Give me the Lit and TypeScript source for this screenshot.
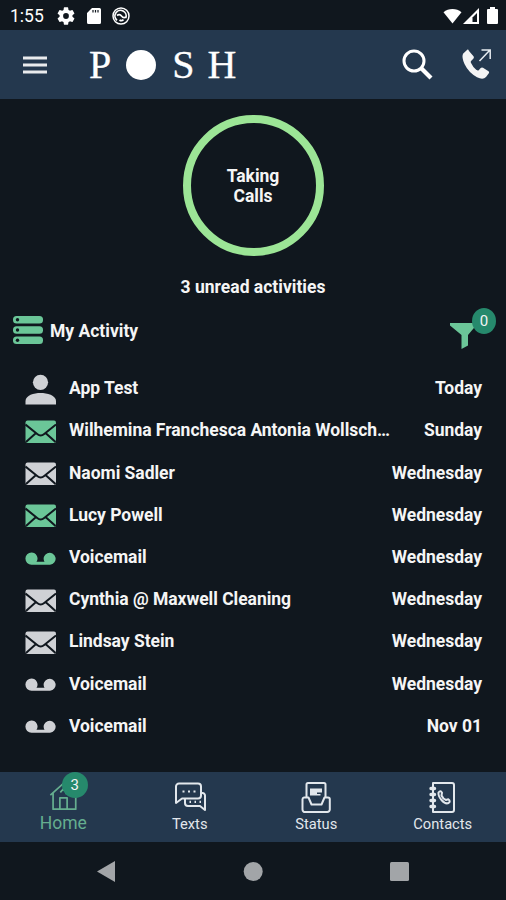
import { LitElement, html, css, svg } from "lit";
import { customElement, property } from "lit/decorators.js";
import { classMap } from "lit/directives/class-map.js";

type Kind = "person" | "mail" | "voicemail";
interface Activity { kind: Kind; name: string; when: string; unread?: boolean; }

const activities: Activity[] = [
  { kind: "person", name: "App Test", when: "Today" },
  { kind: "mail", name: "Wilhemina Franchesca Antonia Wollsch…", when: "Sunday", unread: true },
  { kind: "mail", name: "Naomi Sadler", when: "Wednesday" },
  { kind: "mail", name: "Lucy Powell", when: "Wednesday", unread: true },
  { kind: "voicemail", name: "Voicemail", when: "Wednesday", unread: true },
  { kind: "mail", name: "Cynthia @ Maxwell Cleaning", when: "Wednesday" },
  { kind: "mail", name: "Lindsay Stein", when: "Wednesday" },
  { kind: "voicemail", name: "Voicemail", when: "Wednesday" },
  { kind: "voicemail", name: "Voicemail", when: "Nov 01" },
];

const glyphs = {
  person: svg`<circle cx="15.5" cy="8.300" r="7.6"/><path d="M.5 30.5v-3.4C.5 21.300 9 19 15.500 19S31 21.300 31 27.100v3.400z"/>`,
  mail: svg`<rect x=".5" y="4.500" width="30.500" height="22.500" rx="2"/><path class="cut" d="M.5 8.500 12.200 18q3.500 3 7 0L31 8.500M1 26l10-9M30.500 26l-10-9"/>`,
  voicemail: svg`<path d="M6.500 9.500a6 6 0 0 1 5 9.300h8a6 6 0 1 1 5.500 2.900h-18.500a6.100 6.100 0 0 1 0-12.200z"/>`,
};

@customElement("activity-row")
class ActivityRow extends LitElement {
  @property({ attribute: false }) item!: Activity;
  static styles = css`
    :host { display: block; height: 42.2px; }
    .row { display: flex; align-items: center; height: 100%; padding: 0 24px 0 25px; font-size: 17.500px; font-weight: 700; letter-spacing: -0.03px; }
    svg { width: 31px; height: 31px; flex: none; margin: 2px 13px 0 0; fill: #cfd1d5; }
    .unread svg { fill: #6bc698; }
    .cut { fill: none; stroke: #10171e; stroke-width: 2; }
    .name, .when { white-space: nowrap; }
    .when { margin-left: auto; }
  `;
  render() {
    return html`<div class=${classMap({ row: true, unread: !!this.item.unread })}>
      <svg viewBox="0 0 31 31">${glyphs[this.item.kind]}</svg>
      <span class="name">${this.item.name}</span><span class="when">${this.item.when}</span>
    </div>`;
  }
}

const tabs = [
  { label: "Home", badge: "3", icon: svg`<path d="M1.500 14.500 16 1.500l14 13M4.500 12.500V30h25V12.500M12 30V17.500h8V30M12.500 11.500l3.500-4 3 3v3"/>` },
  { label: "Texts", icon: svg`<path d="M5 2.500h19a3 3 0 0 1 3 3v9a3 3 0 0 1-3 3H8l-6 4.500V5.500a3 3 0 0 1 3-3z"/><path d="M27 12h1.500a2.500 2.500 0 0 1 2.500 2.500V29l-5-4H14a3 3 0 0 1-3-3v-4"/><path class="dots" d="M8.500 10.500h2m3.500 0h2m3.500 0h2M15.500 20.800h1.500m3.500 0h1.500m3.500 0h1.500"/>` },
  { label: "Status", icon: svg`<path d="M6.500 16V3.500a1.500 1.500 0 0 1 1.500-1.500h16a1.500 1.500 0 0 1 1.500 1.500V16"/><path d="M4 16.500h4.500l3 7h10l3-7H28a1.800 1.800 0 0 1 1.800 1.800V28.500a2.500 2.500 0 0 1-2.500 2.500h-22A2.500 2.500 0 0 1 2.500 28.500V18.300A1.800 1.800 0 0 1 4 16.500z"/><path class="solid" d="M10 7.500h12v4h-5v1.500h3.500v1.500H10z"/>` },
  { label: "Contacts", icon: svg`<path d="M6 2h19a2 2 0 0 1 2 2v25a2 2 0 0 1-2 2H6z"/><path class="rings" d="M4 7.500h3.500M4 13.500h3.500M4 19.500h3.500M4 25.500h3.500"/><path d="M11.500 11.500q2-2.500 3.500.2l-.5 2.800q1.500 3.500 4.500 4.500l2.300-.7q2.700 2 .2 3.700-3 1.500-7-3-3.500-4-3-7.500z"/>` },
];

@customElement("app-root")
class AppRoot extends LitElement {
  static styles = css`
    * { box-sizing: border-box; }
    :host { display: flex; flex-direction: column; width: 506px; height: 900px; overflow: hidden; background: #10171e; color: #f5f5f5; font-family: Roboto, sans-serif; }
    svg { display: block; flex: none; overflow: visible; }
    .status { height: 30px; flex: none; display: flex; align-items: center; padding: 1px 8px 0 10px; font-size: 17.500px; color: #fff; }
    .clock { width: 47px; }
    .sd { margin-left: 12px; }
    .dnd { margin-left: 11px; }
    .cell { margin-left: 1px; }
    .battery { margin-left: 8px; }
    .end { margin-left: auto; }
    .bar { height: 68.500px; flex: none; display: flex; align-items: center; background: #24384e; padding: 2px 13px 0 23px; }
    .menu { width: 24px; height: 18px; margin-right: 42px; }
    .logo { display: flex; align-items: center; font: 40px/44px "Liberation Serif", serif; color: #fff; height: 44px; -webkit-text-stroke: .3px #fff; }
    .logo .o { width: 30px; height: 30px; border-radius: 50%; background: #fff; margin: 0 16px 0 15px; }
    .logo .s { margin-right: 13px; }
    .search { margin-left: auto; margin-right: 28px; }
    .call { width: 32px; height: 32px; }
    .ring { width: 141px; height: 141px; flex: none; margin: 16px auto 0; border: 8px solid #9ce596; border-radius: 50%; display: flex; align-items: center; justify-content: center; text-align: center; font-weight: 700; font-size: 17.500px; line-height: 20px; padding-top: 1px; }
    .summary { text-align: center; font-weight: 700; font-size: 17.500px; line-height: 22px; margin-top: 20px; }
    .heading { display: flex; align-items: center; height: 44px; margin-top: 11px; padding: 0 24px 0 13px; font-size: 17.500px; font-weight: 700; }
    .heading .stack { margin: -2px 7px 0 0; }
    .filter { position: relative; margin: 10px 0 0 auto; width: 32px; }
    .badge { position: absolute; border-radius: 50%; background: #26896c; color: #f4f4f4; display: flex; align-items: center; justify-content: center; font-weight: 400; width: 24px; height: 26px; font-size: 15px; }
    .filter .badge { left: 22px; top: -15px; }
    .list { margin-top: 14.700px; }
    .tabs { height: 70px; flex: none; margin-top: auto; background: #24384e; display: grid; grid-template-columns: repeat(4, 1fr); }
    .tab { display: flex; flex-direction: column; align-items: center; padding-top: 9px; font-size: 14.700px; color: #e2e7ec; line-height: 18px; }
    .art { position: relative; margin-bottom: 2px; }
    .art svg { width: 32px; height: 32px; fill: none; stroke: currentColor; stroke-width: 2; stroke-linejoin: round; }
    .art .dots { stroke-width: 2.200; }
    .art .solid { fill: currentColor; stroke: none; }
    .art .rings { stroke-width: 3.400; stroke-linecap: round; }
    .active { color: #65ae8f; font-size: 17.500px; }
    .active .art { margin-bottom: 1px; }
    .active .art svg { width: 29px; height: 29px; margin: 1px 0 2px; stroke-width: 1.900; }
    .art .badge { left: 13px; top: -9px; width: 26px; height: 26px; }
    .nav { height: 58px; flex: none; display: flex; align-items: center; fill: #a2a5a8; padding: 0 97px; justify-content: space-between; }
  `;
  render() {
    return html`
      <div class="status">
        <span class="clock">1:55</span>
        <svg width="18" height="18" viewBox="2 2 20 20" fill="#fff"><path d="M19.140 12.940a7.070 7.070 0 0 0 0-1.880l2.030-1.580a.5.5 0 0 0 .12-.61l-1.920-3.320a.49.49 0 0 0-.59-.22l-2.390.96a7 7 0 0 0-1.620-.94l-.36-2.540A.48.48 0 0 0 13.930 2.400h-3.840a.48.48 0 0 0-.47.410l-.36 2.540a7.300 7.300 0 0 0-1.620.94l-2.390-.96a.48.48 0 0 0-.59.22L2.740 8.870a.47.470 0 0 0 .12.610l2.030 1.580a7.400 7.400 0 0 0 0 1.880l-2.030 1.580a.5.500 0 0 0-.12.610l1.920 3.320c.12.220.370.290.590.220l2.390-.96c.5.380 1.030.700 1.620.940l.36 2.540c.05.240.240.410.480.410h3.840c.24 0 .440-.170.470-.410l.36-2.540a7 7 0 0 0 1.620-.940l2.390.96c.22.080.470 0 .590-.220l1.920-3.320a.47.470 0 0 0-.12-.610zM12 15.200a3.200 3.200 0 1 1 0-6.400 3.200 3.200 0 0 1 0 6.400z"/></svg>
        <svg class="sd" width="14" height="16" viewBox="0 0 14 16"><path fill="#fff" d="M5 0h7.500A1.500 1.500 0 0 1 14 1.500v13a1.500 1.500 0 0 1-1.500 1.500h-11A1.500 1.500 0 0 1 0 14.500V5z"/><path stroke="#10171e" stroke-width="1.200" d="M6 2v2.500M8.500 2v2.500M11 2v2.500"/></svg>
        <svg class="dnd" width="18" height="18" viewBox="0 0 18 18" fill="none" stroke="#fff"><circle cx="9" cy="9" r="8" stroke-width="1.500"/><path stroke-width="1.700" d="M5 13.300A5.600 5.600 0 1 1 13.800 11M5 8.500q2.500-2 4.500.5t4.500 1M7.500 13q2 1.500 4-.3"/></svg>
        <svg class="end" width="19" height="16" viewBox="0 0 19 16"><path fill="#fff" d="M.5 4.200a14 14 0 0 1 18 0L9.500 15.500z"/></svg>
        <svg class="cell" width="16" height="16" viewBox="0 0 16 16"><path fill="#fff" d="M0 16 16 0v16z"/><path fill="#10171e" d="M9.500 9.500 14 5v9H9.500z"/></svg>
        <svg class="battery" width="11" height="17" viewBox="0 0 11 17"><path fill="#fff" d="M3 0h5v2h2a1 1 0 0 1 1 1v13a1 1 0 0 1-1 1H1a1 1 0 0 1-1-1V3a1 1 0 0 1 1-1h2z"/></svg>
      </div>
      <div class="bar">
        <svg class="menu" viewBox="0 0 24 18" stroke="#e9ebed" stroke-width="3"><path d="M0 2h24M0 9h24M0 16h24"/></svg>
        <div class="logo"><span>P</span><span class="o"></span><span class="s">S</span><span>H</span></div>
        <svg class="search" width="31" height="31" viewBox="0 0 31 31" fill="none" stroke="#fff"><circle cx="12" cy="11" r="10" stroke-width="3"/><path d="m19.500 18.500 9.500 9.500" stroke-width="4.300"/></svg>
        <svg class="call" viewBox="0 0 32 32"><path fill="#f4f4f4" d="M6.500 2 3 5.300Q1.500 9 4.500 15.500 8.500 24 17 28.700q6 3 9-.2l3-4q.5-1-.5-1.700l-5.500-3.600q-1.300-.7-2.300.3l-2 2.200q-1 .7-2.500-.5-3.500-3-5.300-7-.6-1.200.4-2l2-2q1-1 .4-2.300L9 2.500Q8-.1 6.500 2z" transform="translate(-1 -.5)"/><path fill="none" stroke="#e6ebf0" stroke-width="1.500" d="m18.500 12 10-10.500M20.500 1h8.700v9"/></svg>
      </div>
      <div class="ring">Taking<br>Calls</div>
      <div class="summary">3 unread activities</div>
      <div class="heading">
        <svg class="stack" width="30" height="28" viewBox="0 0 30 28"><g fill="#6bc698"><rect width="30" height="7.600" rx="3.500"/><rect y="10.200" width="30" height="7.600" rx="3.500"/><rect y="20.400" width="30" height="7.600" rx="3.500"/></g><g fill="#10171e"><circle cx="4.500" cy="3.800" r="1.700"/><circle cx="4.500" cy="14" r="1.700"/><circle cx="4.500" cy="24.200" r="1.700"/></g></svg>
        <span>My Activity</span>
        <div class="filter"><svg width="26" height="26" viewBox="0 0 26 26"><path fill="#6bc698" d="M0 0h26v2.500L18 12v10.500L11.500 26V12L0 2.500z"/></svg><span class="badge">0</span></div>
      </div>
      <div class="list">${activities.map((a) => html`<activity-row .item=${a}></activity-row>`)}</div>
      <div class="tabs">${tabs.map((t, i) => html`
        <div class=${classMap({ tab: true, active: i === 0 })}>
          <div class="art"><svg viewBox="0 0 32 32">${t.icon}</svg>${t.badge ? html`<span class="badge">${t.badge}</span>` : ""}</div>
          <span>${t.label}</span>
        </div>`)}</div>
      <div class="nav">
        <svg width="18" height="21" viewBox="0 0 18 21"><path d="M0 10.500 18 0v21z"/></svg>
        <svg width="19" height="19" viewBox="0 0 19 19"><circle cx="10.200" cy="9.500" r="9.500"/></svg>
        <svg width="19" height="19" viewBox="0 0 19 19"><rect width="19" height="19" rx="1.500"/></svg>
      </div>`;
  }
}
